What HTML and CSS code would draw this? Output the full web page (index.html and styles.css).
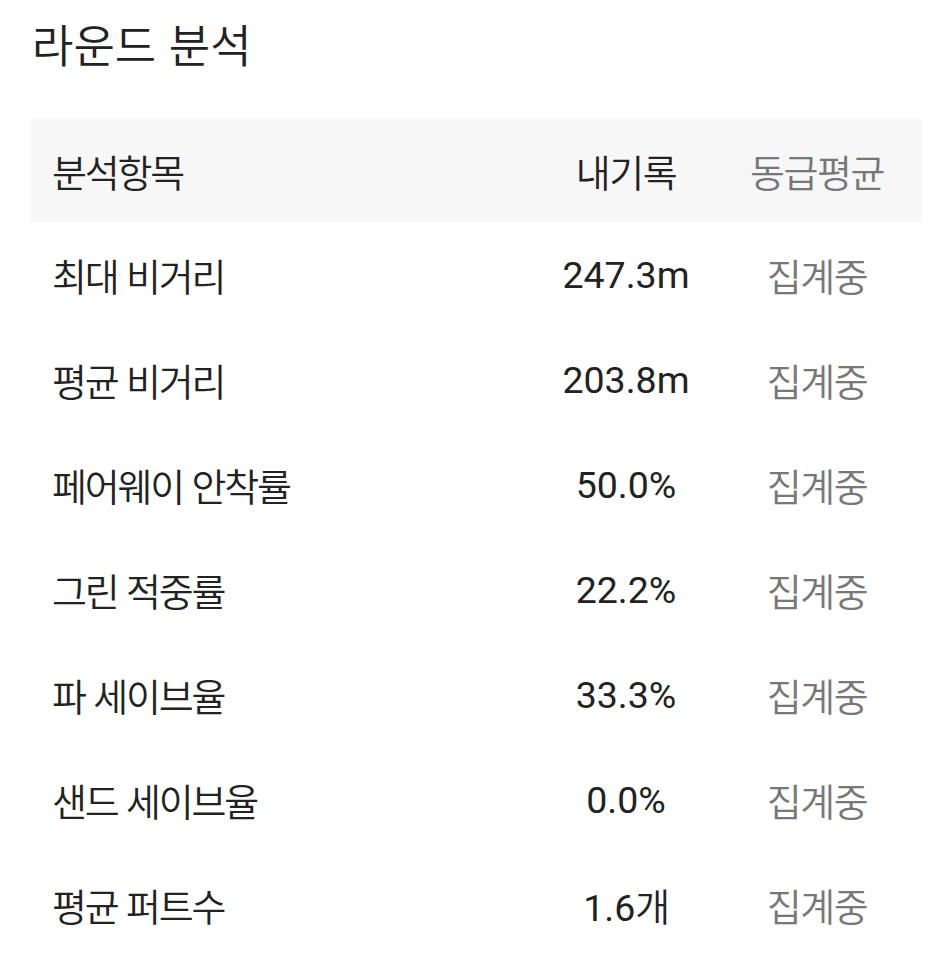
FILE: index.html
```html
<!DOCTYPE html>
<html lang="ko">
<head>
<meta charset="utf-8">
<link rel="stylesheet" href="styles.css">
</head>
<body>
<main class="page">
  <h1 class="title">라운드 분석</h1>
  <div class="table">
    <div class="row head">
      <div class="cell label">분석항목</div>
      <div class="cell mine">내기록</div>
      <div class="cell avg">동급평균</div>
    </div>
    <div class="row">
      <div class="cell label">최대 비거리</div>
      <div class="cell mine">247.3m</div>
      <div class="cell avg">집계중</div>
    </div>
    <div class="row">
      <div class="cell label">평균 비거리</div>
      <div class="cell mine">203.8m</div>
      <div class="cell avg">집계중</div>
    </div>
    <div class="row">
      <div class="cell label">페어웨이 안착률</div>
      <div class="cell mine">50.0%</div>
      <div class="cell avg">집계중</div>
    </div>
    <div class="row">
      <div class="cell label">그린 적중률</div>
      <div class="cell mine">22.2%</div>
      <div class="cell avg">집계중</div>
    </div>
    <div class="row">
      <div class="cell label">파 세이브율</div>
      <div class="cell mine">33.3%</div>
      <div class="cell avg">집계중</div>
    </div>
    <div class="row">
      <div class="cell label">샌드 세이브율</div>
      <div class="cell mine">0.0%</div>
      <div class="cell avg">집계중</div>
    </div>
    <div class="row">
      <div class="cell label">평균 퍼트수</div>
      <div class="cell mine">1.6<span class="ko">개</span></div>
      <div class="cell avg">집계중</div>
    </div>
  </div>
</main>
</body>
</html>
```
FILE: styles.css
```css
* { box-sizing: border-box; }
html, body { margin: 0; padding: 0; background: #fff; }
body {
  font-family: Roboto, "Noto Sans CJK KR", sans-serif;
  color: #222;
}
.page {
  padding: 14px 25px 0 31px;
}
.title {
  margin: 0 0 44px 1px;
  font-family: "Noto Sans CJK KR", sans-serif;
  font-weight: 350;
  font-size: 45px;
  line-height: 60px;
  color: #222;
}
.table {
  display: flex;
  flex-direction: column;
}
.row {
  display: grid;
  grid-template-columns: 1fr 172px 210px;
  align-items: center;
  height: 105px;
  font-size: 37.5px;
  font-weight: 400;
}
.row.head {
  height: 104px;
  background: #f7f7f7;
}
.cell { white-space: nowrap; }
.label {
  padding-left: 21px;
  font-family: "Noto Sans CJK KR", sans-serif;
  font-weight: 350;
  font-size: 38px;
  letter-spacing: -2.2px;
}
.mine { text-align: center; }
.head .mine, .avg, .ko {
  font-family: "Noto Sans CJK KR", sans-serif;
  font-weight: 350;
  font-size: 38px;
  letter-spacing: -1.5px;
}
.avg { text-align: center; color: #777; }
```
